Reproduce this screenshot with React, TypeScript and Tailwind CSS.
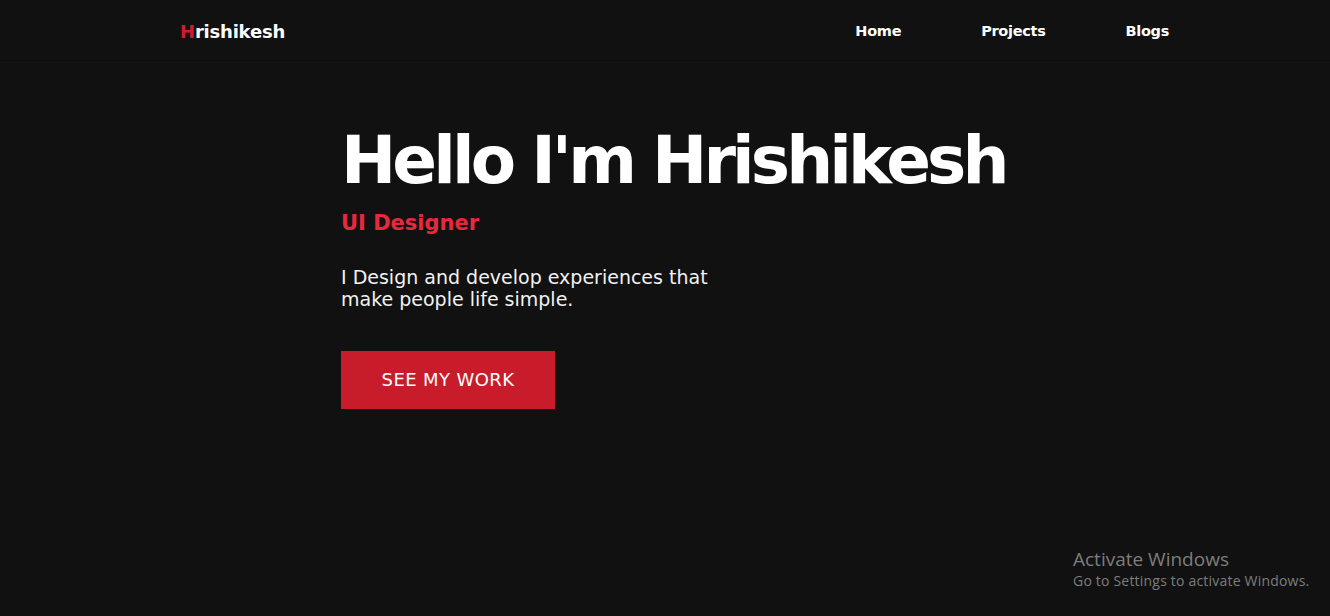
import React from "react";

const font = { fontFamily: '"DejaVu Sans", "Open Sans", sans-serif' };

const navLinks = ["Home", "Projects", "Blogs"];

const App: React.FC = () => {
  return (
    <div className="relative min-h-[616px] w-full bg-[#111111] text-white" style={font}>
      {/* Header */}
      <header className="h-[63px] border-b border-[#161616]">
        <div className="flex h-full items-center justify-between pl-[180px] pr-[161px] pt-[1px]">
          <a className="text-[18px] font-bold tracking-[-0.2px]">
            <span className="text-[#d01c2b]">H</span>rishikesh
          </a>
          <nav className="flex items-center gap-[80px] pt-[1px]">
            {navLinks.map((link) => (
              <a key={link} className="text-[14.5px] font-bold tracking-[-0.3px]">
                {link}
              </a>
            ))}
          </nav>
        </div>
      </header>

      {/* Hero */}
      <section className="pl-[341px] pt-[58px]">
        <h1 className="text-[66px] leading-[80px] font-bold tracking-[-3.9px]">Hello I'm Hrishikesh</h1>
        <h2 className="mt-[7px] text-[21px] font-bold text-[#e8293d]">UI Designer</h2>
        <p className="mt-[26px] w-[420px] text-[19px] leading-[22px] text-[#f2f2f2]">
          I Design and develop experiences that
          <br />
          make people life simple.
        </p>
        <button className="mt-[41px] h-[58px] w-[214px] bg-[#c91c2a] text-[18px] tracking-[0.4px] uppercase text-white">
          See my work
        </button>
      </section>

      {/* Windows watermark */}
      <div
        className="absolute left-[1073px] top-[547px] text-[#7d7d7d]"
        style={{ fontFamily: '"Open Sans", "Noto Sans", sans-serif' }}
      >
        <div className="text-[19px] leading-[24px]">Activate Windows</div>
        <div className="text-[14px] leading-[20px] tracking-[0.2px]">Go to Settings to activate Windows.</div>
      </div>
    </div>
  );
};

export default App;
